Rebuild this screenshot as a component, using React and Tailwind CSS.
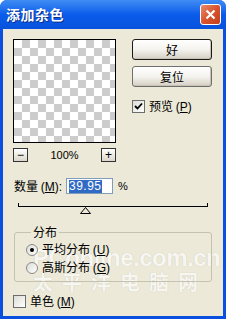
import React from "react";

const cjk = "font-['SimSun','Noto_Sans_CJK_SC',sans-serif]";

const XpButton = ({ children, isDefault }) => (
  <button
    className={`w-[80px] h-[21px] rounded-[3px] border ${
      isDefault ? "border-[#1b1b1b]" : "border-[#6f6f6f]"
    } bg-gradient-to-b from-[#ffffff] via-[#f4f3ee] to-[#d6d0c5] text-[12px] text-black leading-none flex items-center justify-center shadow-[inset_-1px_-1px_0_#c9c2b4]`}
  >
    {children}
  </button>
);

const SmallBtn = ({ children }) => (
  <button className="w-[15px] h-[14px] border border-[#333] bg-gradient-to-b from-white to-[#dcd7cb] text-[12px] leading-none flex items-center justify-center font-['Liberation_Sans',sans-serif]">
    {children}
  </button>
);

const CheckBox = ({ checked }) => (
  <span className="w-[13px] h-[13px] border border-[#6d6d6d] bg-gradient-to-br from-[#dcdcd7] to-white flex items-center justify-center shrink-0">
    {checked && (
      <svg width="9" height="9" viewBox="0 0 9 9">
        <path d="M1 4 L3.5 6.5 L8 1.5" stroke="#000" strokeWidth="1.8" fill="none" />
      </svg>
    )}
  </span>
);

const Radio = ({ checked }) => (
  <span className="w-[12px] h-[12px] rounded-full border border-[#8a8a8a] bg-gradient-to-br from-[#dcdcd7] to-white flex items-center justify-center shrink-0">
    {checked && <span className="w-[4px] h-[4px] rounded-full bg-black" />}
  </span>
);

export default function App() {
  return (
    <div className="w-[226px] h-[319px] bg-[#0a4fe0] rounded-t-[7px] flex flex-col overflow-hidden">
      {/* title bar */}
      <div className="h-[29px] shrink-0 flex items-center justify-between pl-[6px] pr-[5px] bg-gradient-to-b from-[#3f8cf3] via-[#0a5ceb] to-[#0852dc]">
        <span
          className={`text-white text-[14px] font-bold tracking-[0.5px] ${cjk} [text-shadow:1px_1px_0_#0a2c8a]`}
        >
          添加杂色
        </span>
        <span className="w-[21px] h-[21px] rounded-[3px] border border-white bg-gradient-to-br from-[#e98a6c] via-[#d9532c] to-[#c2401c] flex items-center justify-center">
          <svg width="11" height="11" viewBox="0 0 11 11">
            <path d="M1.5 1.5 L9.5 9.5 M9.5 1.5 L1.5 9.5" stroke="#fff" strokeWidth="2.2" />
          </svg>
        </span>
      </div>

      {/* body */}
      <div className={`relative flex-1 mx-[3px] mb-[3px] bg-[#ece9d8] text-[12px] leading-[14px] text-black ${cjk}`}>
        {/* watermark, behind the controls */}
        <div className="pointer-events-none absolute z-0 left-[30px] top-[216px] flex flex-col text-[#f7f6f1] [text-shadow:0_0_1px_#c4c1b3]">
          <span className="font-['Liberation_Sans',sans-serif] font-bold text-[24px] leading-[26px] tracking-[-0.5px]">
            PConline.com.cn
          </span>
          <span className="text-[20px] leading-[22px] tracking-[9px] font-bold">太平洋电脑网</span>
        </div>

        <div className="relative z-10 flex flex-col">
          <div className="flex pl-[10px] pt-[10px] gap-[16px]">
            <div className="w-[103px] flex flex-col">
              <div className="h-[104px] border border-black bg-[conic-gradient(#cccccc_25%,#ffffff_0_50%,#cccccc_0_75%,#ffffff_0)] bg-[length:16px_16px]" />
              <div className="mt-[5px] flex items-center justify-between">
                <SmallBtn>−</SmallBtn>
                <span className="text-[11px] font-['Liberation_Sans',sans-serif]">100%</span>
                <SmallBtn>+</SmallBtn>
              </div>
            </div>
            <div className="w-[80px] flex flex-col">
              <XpButton isDefault>好</XpButton>
              <div className="mt-[6px]">
                <XpButton>复位</XpButton>
              </div>
              <label className="mt-[12px] flex items-center gap-[4px]">
                <CheckBox checked />
                <span>
                  预览 <span className="font-['Liberation_Sans',sans-serif]">(<u>P</u>)</span>
                </span>
              </label>
            </div>
          </div>

          {/* amount */}
          <div className="mt-[16px] h-[16px] pl-[11px] flex items-center">
            <span className="w-[52px]">
              数量 <span className="font-['Liberation_Sans',sans-serif]">(<u>M</u>):</span>
            </span>
            <div className="w-[47px] h-[16px] border border-[#7f9db9] bg-white flex items-center pl-[2px]">
              <span className="bg-[#316ac5] text-white text-[12px] leading-[13px] font-['Liberation_Sans',sans-serif] tracking-[0.5px]">
                39.95
              </span>
            </div>
            <span className="ml-[5px] text-[11px] font-['Liberation_Sans',sans-serif]">%</span>
          </div>

          {/* slider */}
          <div className="relative mx-[15px] mt-[9px] h-[10px]">
            <div className="h-[4px] border-l border-r border-b border-black" />
            <svg className="absolute left-[62px] top-[4px]" width="11" height="7" viewBox="0 0 11 7">
              <path d="M5.5 0.5 L10.5 6.5 L0.5 6.5 Z" fill="#ece9d8" stroke="#000" strokeWidth="1" />
            </svg>
          </div>

          {/* distribution group */}
          <div className="relative mx-[11px] mt-[19px] h-[50px] border border-[#c5c2b2] rounded-[3px] flex flex-col pl-[11px] pt-[9px] gap-[3px]">
            <span className="absolute -top-[8px] left-[16px] px-[2px] bg-[#ece9d8]">分布</span>
            <label className="flex items-center gap-[4px]">
              <Radio checked />
              <span>
                平均分布 <span className="font-['Liberation_Sans',sans-serif]">(<u>U</u>)</span>
              </span>
            </label>
            <label className="flex items-center gap-[4px]">
              <Radio />
              <span>
                高斯分布 <span className="font-['Liberation_Sans',sans-serif]">(<u>G</u>)</span>
              </span>
            </label>
          </div>

          {/* mono */}
          <label className="mt-[12px] pl-[10px] flex items-center gap-[4px]">
            <CheckBox />
            <span>
              单色 <span className="font-['Liberation_Sans',sans-serif]">(<u>M</u>)</span>
            </span>
          </label>
        </div>
      </div>
    </div>
  );
}
